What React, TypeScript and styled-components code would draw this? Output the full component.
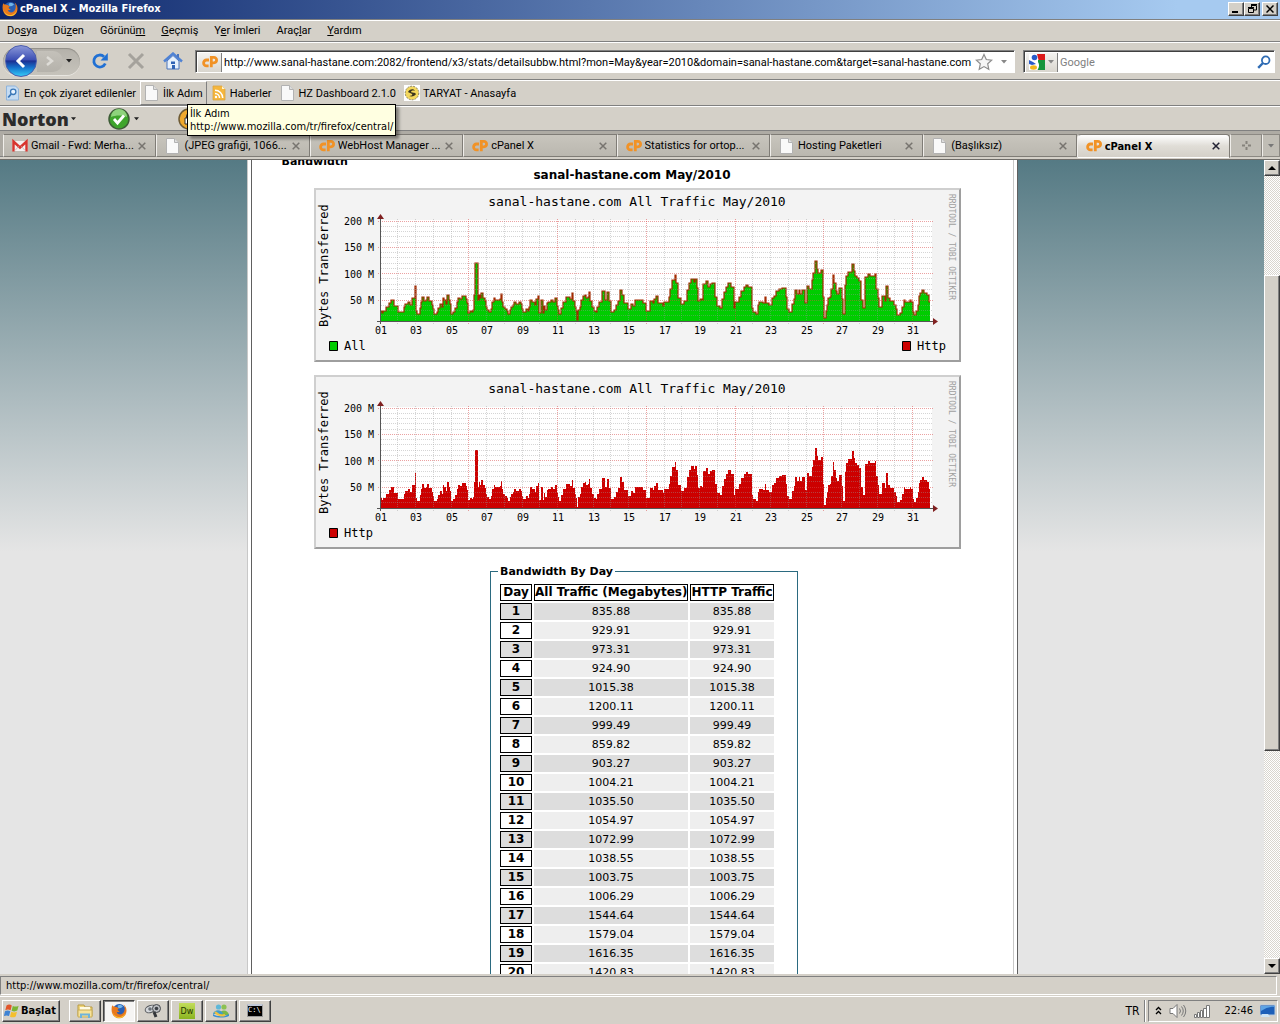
import React from "react";
import styled, { createGlobalStyle, css } from "styled-components";

const UI = `Tahoma, "DejaVu Sans Condensed", "DejaVu Sans", sans-serif`;
const NARROW = `Tahoma, Roboto, sans-serif`;
const PAGE = `Verdana, "DejaVu Sans", sans-serif`;
const MONO = `"DejaVu Sans Mono", monospace`;
const FACE = "#d4d0c8";

const Global = createGlobalStyle`
  * { box-sizing: border-box; }
  body { margin: 0; background: ${FACE}; font-family: ${UI}; font-size: 11px; color: #000; }
  button, input { font: inherit; color: inherit; padding: 0; border: 0; background: none; }
  svg { display: block; flex: none; }
`;

const raised = css`
  border: 1px solid;
  border-color: #fff #404040 #404040 #fff;
  box-shadow: inset -1px -1px 0 #808080;
  background: ${FACE};
`;

const Desktop = styled.div`
  display: flex;
  flex-direction: column;
  height: 100vh;
  overflow: hidden;
`;

const TitleBar = styled.header`
  display: flex;
  align-items: center;
  height: 20px;
  padding: 0 2px 2px;
  border-bottom: 1px solid #808080;
  background: linear-gradient(90deg, #0a246a, #a6caf0 92%);
  color: #fff;
  font-weight: bold;
`;
const TitleText = styled.h1`
  flex: 1;
  margin: 0 0 0 2px;
  font-size: 11px;
  line-height: 16px;
`;
const WindowButton = styled.button<{ $gap?: boolean }>`
  ${raised}
  display: grid;
  place-items: center;
  width: 16px;
  height: 14px;
  margin-left: ${(p) => (p.$gap ? 2 : 0)}px;
`;

const Bar = styled.div<{ $h: number }>`
  display: flex;
  align-items: center;
  flex: none;
  height: ${(p) => p.$h}px;
  border-top: 1px solid #fff;
  border-bottom: 1px solid #808080;
  background: ${FACE};
`;
const MenuBar = styled(Bar).attrs({ as: "nav" })`
  gap: 16px;
  padding: 0 7px;
  font-family: ${NARROW};
`;
const MenuButton = styled.button`
  line-height: 16px;
`;

const NavCapsule = styled.div`
  display: flex;
  align-items: center;
  width: 77px;
  height: 27px;
  margin-left: 3px;
  border-radius: 14px;
  background: linear-gradient(#b4b1aa, #c6c3bb);
  box-shadow: inset 0 1px 1px #918e88, 0 1px 0 #e8e6e1;
`;
const BackButton = styled.button`
  display: grid;
  place-items: center;
  width: 32px;
  height: 32px;
  margin-left: 2px;
  border-radius: 50%;
  border: 1px solid #4a5cae;
  background: linear-gradient(#8a97d8 0, #3c4fb4 46%, #1c2f92 50%, #1673cc 72%, #35c8f5 100%);
`;
const ForwardButton = styled.button`
  display: grid;
  place-items: center;
  width: 26px;
  height: 21px;
  border-radius: 0 10px 10px 0;
  background: linear-gradient(#c4c1ba, #b5b2ab);
`;
const IconButton = styled.button`
  display: grid;
  place-items: center;
  min-width: 12px;
  height: 20px;
`;
const NavTools = styled.div`
  display: flex;
  gap: 18px;
  margin: 0 12px 0 11px;
`;
const Field = styled.div`
  display: flex;
  align-items: stretch;
  height: 23px;
  border: 1px solid;
  border-color: #808080 #fff #fff #808080;
  box-shadow: inset 1px 1px 0 #404040;
  background: #fff;
  padding: 2px 0 0 2px;
`;
const AddressField = styled(Field)`
  flex: 1;
`;
const SearchField = styled(Field)`
  width: 252px;
  margin: 0 5px 0 8px;
`;
const SiteBadge = styled.button<{ $w: number }>`
  display: flex;
  align-items: center;
  justify-content: space-evenly;
  width: ${(p) => p.$w}px;
  border-right: 1px solid #808080;
  background: linear-gradient(#f4f3f1, #d8d5ce);
`;
const TextInput = styled.input`
  flex: 1;
  min-width: 0;
  padding-left: 2px;
  outline: 0;
  font-family: ${NARROW};
  &::placeholder { color: #808080; opacity: 1; }
`;
const FieldTool = styled.button`
  display: grid;
  place-items: center;
  width: 20px;
`;

const Bookmarks = styled(Bar)`
  padding-left: 1px;
  font-family: ${NARROW};
`;
const Bookmark = styled.a<{ $hot?: boolean }>`
  display: flex;
  align-items: center;
  gap: 3px;
  height: 24px;
  padding: 0 3px;
  border: 1px solid;
  border-color: ${(p) => (p.$hot ? "#fff #808080 #808080 #fff" : "transparent")};
  color: #000;
  text-decoration: none;
  white-space: nowrap;
`;
const HoverHost = styled.div`
  position: relative;
`;
const Tooltip = styled.div`
  position: absolute;
  z-index: 5;
  left: 47px;
  top: 23px;
  padding: 2px;
  border: 1px solid #000;
  background: #ffffe1;
  box-shadow: 3px 3px 3px #0006;
  font-family: ${UI};
  line-height: 13px;
  white-space: nowrap;
`;

const NortonBar = styled(Bar)`
  padding-left: 2px;
`;
const NortonName = styled.button`
  display: flex;
  align-items: center;
  gap: 2px;
  width: 106px;
  color: #2b2b2b;
  font: 800 18px/22px "Open Sans", sans-serif;
`;
const NortonStatus = styled.button`
  display: flex;
  align-items: center;
  gap: 4px;
  width: 70px;
`;

const TabStrip = styled.div`
  display: flex;
  flex: none;
  height: 29px;
  padding: 3px 0 0 3px;
  background: linear-gradient(#aeaba4 0 25px, #808080 25px 26px, #d4d0c8 26px 28px, #6f6d69 28px);
  font-family: ${NARROW};
`;
const Tab = styled.div<{ $active?: boolean }>`
  display: flex;
  align-items: center;
  flex: 1 1 0;
  min-width: 0;
  gap: 3px;
  height: ${(p) => (p.$active ? 24 : 23)}px;
  padding: 0 9px 0 8px;
  border: 1px solid #7f7c76;
  border-bottom-color: ${(p) => (p.$active ? "transparent" : "#7f7c76")};
  border-left-color: #f0eeea;
  border-radius: ${(p) => (p.$active ? "4px 4px 0 0" : "0")};
  background: ${(p) => (p.$active ? "linear-gradient(#fff, #e0ddd7 50%, #d4d0c8)" : "linear-gradient(#c8c5bd, #bab7af)")};
  font-family: ${(p) => (p.$active ? UI : NARROW)};
  font-weight: ${(p) => (p.$active ? "bold" : "normal")};
`;
const TabLabel = styled.button`
  flex: 1;
  min-width: 0;
  overflow: hidden;
  text-align: left;
  white-space: nowrap;
`;
const StripButton = styled.button<{ $w: number }>`
  display: grid;
  place-items: center;
  width: ${(p) => p.$w}px;
  height: 23px;
  border: 1px solid #8c8983;
  border-left-color: #f0eeea;
  background: #c0bdb5;
`;

const Viewport = styled.div`
  display: flex;
  flex: 1;
  min-height: 0;
`;
const PageArea = styled.main`
  display: flex;
  justify-content: center;
  flex: 1;
  overflow: hidden;
  background: linear-gradient(#557a84 0, #e5e5e5 392px);
  font-family: ${PAGE};
`;
const Sheet = styled.div`
  width: 771px;
  padding: 0 3px;
  border-left: 1px solid #c8c8c8;
  border-right: 1px solid #606060;
  background: #fff;
`;
const SheetInner = styled.div`
  height: 100%;
  overflow: hidden;
  border-left: 1px solid #606060;
  border-right: 1px solid #c8c8c8;
`;
const SectionTitle = styled.h2`
  margin: -5px 0 0 30px;
  font-size: 11px;
  line-height: 13px;
`;
const PeriodTitle = styled.h3`
  margin: 0 0 6px;
  font-size: 12px;
  line-height: 14px;
  text-align: center;
`;
const ChartFrame = styled.figure`
  width: 647px;
  margin: 0 auto 13px;
  border: 2px solid;
  border-color: #cfcfcf #9e9e9e #9e9e9e #cfcfcf;
  background: #f3f3f3;
`;
const Centered = styled.div<{ $shift: number }>`
  padding-left: ${(p) => p.$shift}px;
`;
const DayBox = styled.fieldset`
  width: 308px;
  min-height: 460px;
  margin: 14px auto 0;
  padding: 0 7px;
  border: 1px solid #2b6a80;
`;
const DayLegend = styled.legend`
  padding: 1px 2px 0;
  font-weight: bold;
  line-height: 16px;
`;
const DayTable = styled.table`
  width: 278px;
  margin-top: 2px;
  table-layout: fixed;
  border-collapse: separate;
  border-spacing: 2px;
  text-align: center;
  line-height: 15px;
`;
const Column = styled.col<{ $w: number }>`
  width: ${(p) => p.$w}px;
`;
const Head = styled.th<{ $shade?: boolean }>`
  padding: 0;
  border: 1px solid #000;
  background: ${(p) => (p.$shade ? "#ddd" : "#fff")};
  font-size: 12px;
  white-space: nowrap;
`;
const Cell = styled.td<{ $shade?: boolean }>`
  padding: 1px;
  background: ${(p) => (p.$shade ? "#ddd" : "#eee")};
`;

const ScrollTrack = styled.div`
  display: flex;
  flex-direction: column;
  width: 16px;
  background: repeating-conic-gradient(#fff 0 25%, #d8d5ce 0 50%) 0 0 / 2px 2px;
`;
const ScrollButton = styled.button`
  ${raised}
  display: grid;
  place-items: center;
  height: 16px;
`;
const ScrollGap = styled.div<{ $grow: number }>`
  flex: ${(p) => p.$grow};
`;
const Thumb = styled.div`
  ${raised}
  flex: 475;
`;

const StatusBar = styled.footer`
  flex: none;
  height: 22px;
  padding: 2px 3px 1px 0;
  background: ${FACE};
`;
const StatusText = styled.div`
  height: 19px;
  padding-left: 5px;
  border: 1px solid;
  border-color: #808080 #fff #fff #808080;
  line-height: 18px;
`;
const TaskBar = styled.div`
  display: flex;
  align-items: center;
  flex: none;
  height: 28px;
  padding: 0 2px;
  border-top: 1px solid #fff;
  background: ${FACE};
`;
const StartButton = styled.button`
  ${raised}
  display: flex;
  align-items: center;
  gap: 1px;
  width: 58px;
  height: 22px;
  padding-left: 1px;
  margin-right: 9px;
  font-weight: bold;
`;
const TaskButton = styled.button<{ $active?: boolean }>`
  ${raised}
  display: grid;
  place-items: center;
  width: 32px;
  height: 22px;
  margin-right: 2px;
  ${(p) => p.$active && css`
    background: #f6f5f3;
    border-color: #404040 #fff #fff #404040;
    box-shadow: inset 1px 1px 0 #808080;
  `}
`;
const Spacer = styled.div`
  flex: 1;
`;
const Language = styled.span`
  padding-right: 5px;
  margin-right: 3px;
  border-right: 1px solid #808080;
  box-shadow: 1px 0 0 #fff;
  font-size: 12px;
  line-height: 22px;
`;
const Tray = styled.div`
  display: flex;
  align-items: center;
  gap: 7px;
  height: 22px;
  padding: 0 1px 0 6px;
  border: 1px solid;
  border-color: #808080 #fff #fff #808080;
`;
const Clock = styled.time`
  margin-left: 6px;
  font-size: 11px;
`;

/* ---------- icons ---------- */
const Caret = ({ color = "#222", w = 6 }) => (
  <svg width={w} height="4" viewBox="0 0 6 4"><path d="M0 0h6L3 3.4z" fill={color} /></svg>
);
const FirefoxIcon = ({ size = 16 }) => (
  <svg width={size} height={size} viewBox="0 0 16 16">
    <circle cx="8.3" cy="7.6" r="6.6" fill="#2a5fb4" />
    <path d="M7 2.5c2-1 4-.4 5 1l-2 1.500-2 .2-1.500-1z" fill="#6fb4e8" />
    <path d="M1.200 2.200c-.9 3-.9 6.300.3 8.800 1.500 3.200 4.700 4.700 7.600 4.300 3.900-.4 6.400-3.800 6.400-7.500 0-2.500-1-4.800-2.900-6.200 1.200 2 1.400 4 .9 5.600-.4 2.500-2.300 4.300-4.700 4.200-1.800-.1-3-1.300-2.900-2.300 1 .3 2.100 0 2.800-.8-1.300-.1-2-.8-2-1.500 0-.6.800-.9 1.600-1.500-1-.1-2-.4-2.600-1.300-.9 0-1.400-.2-1.900-.6-.9.1-1.900-.2-2.600-1.200z" fill="#e8781c" />
    <path d="M1.500 8c.5 3.500 3.400 6 6.800 6 3.300 0 6-2.300 6.400-5.500.3 3.600-2.600 6.500-6.200 6.600C4.600 15.200 1.600 12 1.500 8z" fill="#f9c22e" />
  </svg>
);
const PageIcon = () => (
  <svg width="16" height="16" viewBox="0 0 16 16">
    <path d="M1.500.5h8l4 4v11h-12z" fill="#f9f9f9" stroke="#b2b2b2" />
    <path d="M9.500.5v4h4" fill="#ddd" stroke="#b2b2b2" />
  </svg>
);
const CpIcon = () => (
  <svg width="16" height="16" viewBox="0 0 16 16" fill="none" stroke="#f19226" strokeWidth="2.800">
    <path d="M7 6H4.500a2.900 2.900 0 0 0 0 5.800H6.600" />
    <path d="M9.300 13.300V3.400h2.600a2.700 2.700 0 0 1 0 5.400H9.300" />
  </svg>
);
const GmailIcon = () => (
  <svg width="16" height="16" viewBox="0 0 16 16">
    <path d="M.5 3h15v10H.5z" fill="#f4f0f0" />
    <path d="M1.500 13.500v-10L8 9.500l6.500-6v10" fill="none" stroke="#d8342e" strokeWidth="2.400" />
    <path d="M3 12.500l3.500-4M13 12.500l-3.500-4" stroke="#d9b8b8" />
  </svg>
);
const CloseMark = ({ color = "#77746f" }) => (
  <svg width="8" height="8" viewBox="0 0 8 8"><path d="M.7.7l6.600 6.600M7.300.7L.7 7.300" stroke={color} strokeWidth="1.500" /></svg>
);
const RssIcon = () => (
  <svg width="16" height="16" viewBox="0 0 16 16">
    <path d="M2 1h9l3 3v11H2z" fill="#f5b63c" stroke="#d9a441" strokeWidth=".8" />
    <path d="M11 1v3h3" fill="#fff3d0" />
    <g fill="none" stroke="#fff" strokeWidth="1.500"><path d="M4 8.500a4.500 4.500 0 0 1 4.500 4.500M4 5.300A7.700 7.700 0 0 1 11.700 13" /></g>
    <circle cx="5" cy="12" r="1.200" fill="#fff" />
  </svg>
);
const VisitedIcon = () => (
  <svg width="16" height="16" viewBox="0 0 16 16">
    <path d="M1.500 1h9l3 3v11h-12z" fill="#c4dbf2" stroke="#8fb4dc" />
    <circle cx="8.200" cy="6.800" r="2.700" fill="#e9f4ff" stroke="#3b78b8" strokeWidth="1.300" />
    <path d="M6.200 9l-3 3.500" stroke="#3b78b8" strokeWidth="1.800" />
  </svg>
);
const TaryatIcon = () => (
  <svg width="16" height="16" viewBox="0 0 16 16">
    <path d="M0 0h16v16H0z" fill="#fff" />
    <circle cx="8" cy="8" r="6.800" fill="#f3d75c" stroke="#8d8460" strokeDasharray="2 1" />
    <path d="M4 7c1-3 6-4 7-1-2-1-4 0-4 1 1 1 4 0 5 2-1 2-4 3-7 2 2 0 4-1 3-2S5 8 4 7z" fill="#3a3420" />
  </svg>
);
const ReloadIcon = () => (
  <svg width="18" height="18" viewBox="0 0 18 18">
    <path d="M14.300 11.500A6 6 0 1 1 13 4.700" fill="none" stroke="#2070d4" strokeWidth="2.800" />
    <path d="M16.800 1v7.500H9.500z" fill="#2070d4" />
  </svg>
);
const StopIcon = () => (
  <svg width="18" height="18" viewBox="0 0 18 18"><path d="M2 2l14 14M16 2L2 16" stroke="#a5a29c" strokeWidth="3" /></svg>
);
const HomeIcon = () => (
  <svg width="20" height="18" viewBox="0 0 20 18">
    <path d="M4 9l6-5.500L16 9v8H4z" fill="#e6f0fc" stroke="#4a74bd" />
    <path d="M1 9.500L10 1.500l9 8" fill="none" stroke="#4f82d4" strokeWidth="2.400" />
    <path d="M8 9.500h4v2.500H8zM9 13h3v4H9z" fill="#2f62b5" />
    <path d="M14 2h2v4l-2-1.500z" fill="#4a74bd" />
  </svg>
);
const StarIcon = () => (
  <svg width="18" height="18" viewBox="0 0 18 18">
    <path d="M9 1.500l2.300 5 5.400.6-4 3.700 1.100 5.500L9 13.600l-4.800 2.700 1.100-5.500-4-3.700 5.400-.6z" fill="#f6f6f6" stroke="#8d8d8d" strokeWidth="1.200" />
  </svg>
);
const GoogleIcon = () => (
  <svg width="16" height="16" viewBox="0 0 16 16">
    <path d="M0 0h16v16H0z" fill="#fff" />
    <path d="M8 0h8v6H9.500z" fill="#dd1a1a" />
    <path d="M9 6h7v10H8.500c2-3 2-6 .5-8z" fill="#15953d" />
    <circle cx="5.500" cy="3.500" r="2.800" fill="#2a5bc8" />
    <path d="M0 6l4 2 3 2-4 1-3-1z" fill="#2a5bc8" />
    <ellipse cx="4.500" cy="13.500" rx="3.500" ry="2.200" fill="#f0b81c" />
  </svg>
);
const SearchIcon = () => (
  <svg width="14" height="14" viewBox="0 0 14 14" fill="none" stroke="#2f6cb4">
    <circle cx="8.700" cy="5.200" r="3.800" strokeWidth="1.800" /><path d="M6 8L1.200 12.800" strokeWidth="2.400" />
  </svg>
);
const CheckBall = () => (
  <svg width="22" height="22" viewBox="0 0 22 22">
    <circle cx="11" cy="11" r="10" fill="#3fa52c" stroke="#3d5c36" strokeWidth="1.500" />
    <path d="M3 9a8 8 0 0 1 16 0c-5-2-11-2-16 0z" fill="#8ed37c" />
    <path d="M6 11l3.500 4L16 7.500" fill="none" stroke="#fff" strokeWidth="2.800" />
  </svg>
);
const LockBall = () => (
  <svg width="22" height="22" viewBox="0 0 22 22">
    <circle cx="11" cy="11" r="10" fill="#f0a92c" stroke="#6e5b35" strokeWidth="1.500" />
    <path d="M7 10h8v6H7zM8.500 10V8a2.500 2.500 0 0 1 5 0v2" fill="#fff" stroke="#333" />
  </svg>
);
const WindowsFlag = () => (
  <svg width="16" height="16" viewBox="0 0 16 16">
    <path d="M2.500 2.500c2-1.300 3.700-1 5.300-.1L6.600 7.300c-1.700-1-3.500-1-5.300 0z" fill="#e2562a" />
    <path d="M8.800 2.900c1.900 1 3.800.9 5.800-.2l-1.300 4.900c-1.900 1.100-3.800 1-5.700.2z" fill="#7ab534" />
    <path d="M1 8.300c1.900-1.200 3.600-1 5.300-.1l-1.300 4.900c-1.600-.9-3.400-1-5.200.1z" fill="#3f83d3" />
    <path d="M7.300 8.800c1.900 1 3.700.9 5.700-.1l-1.300 4.800c-1.900 1.200-3.800 1-5.700.2z" fill="#f4bf2c" />
  </svg>
);
const FolderIcon = () => (
  <svg width="18" height="16" viewBox="0 0 18 16">
    <path d="M2 2h6l1 2h7v9H2z" fill="#f0d67a" stroke="#b99b45" />
    <path d="M4 4h10v5H4z" fill="#fffbe4" />
    <path d="M2 7h14v7H2z" fill="#f7e39a" stroke="#c9ad57" />
    <path d="M5 15v-3.500h8V15" fill="none" stroke="#6fb3da" strokeWidth="2" />
  </svg>
);
const DishIcon = () => (
  <svg width="18" height="16" viewBox="0 0 18 16">
    <ellipse cx="6.500" cy="6" rx="5.500" ry="3.500" transform="rotate(-20 6.500 6)" fill="#d5d8dc" stroke="#55585c" />
    <circle cx="6" cy="6" r="1.800" fill="#6a7078" />
    <circle cx="12.500" cy="5.500" r="4" fill="#b9bcc0" stroke="#44474b" /><circle cx="12.500" cy="5.500" r="1.800" fill="#3c4046" />
    <path d="M10 9l2 5" stroke="#34373b" strokeWidth="3" />
  </svg>
);
const PeopleIcon = () => (
  <svg width="18" height="16" viewBox="0 0 18 16">
    <circle cx="6.500" cy="4" r="2.600" fill="#5fb8d8" /><circle cx="12" cy="4" r="2.600" fill="#8cc152" />
    <path d="M7 12c1-6 9-6 10 0z" fill="#79b84a" /><path d="M1 11c1-5 9-5 10 0z" fill="#3f9ccc" />
    <path d="M1 11c4 3 11 3 16 0v2c-5 2-11 2-16 0z" fill="#3b8fd0" />
    <path d="M3 9c3 3 7 4 10 3" fill="none" stroke="#f0c040" strokeWidth="2" />
  </svg>
);
const DwBadge = styled.span`
  display: grid;
  place-items: center;
  width: 16px;
  height: 16px;
  background: linear-gradient(#c3dd5a, #8bb420);
  color: #243500;
  font-size: 9px;
`;
const CmdBadge = styled.span`
  width: 16px;
  height: 13px;
  border: 1px solid #999;
  border-top: 2px solid #c0c8d8;
  background: #000;
  color: #fff;
  font: 7px/9px ${MONO};
  text-align: left;
`;

/* ---------- traffic chart ---------- */
// Each entry is "x:height" in plot units; the level holds until the next entry.
const SERIES = `0:10 1:8 2:10 5:14 8:18 10:21 13:15 17:9 23:14 24:17 27:19 29:16 31:23 34:35 35:10 36:7 39:13 40:19 41:24 43:20 45:21 46:24
48:20 51:16 52:12 53:7 56:9 57:13 59:17 61:14 62:23 63:21 65:17 66:26 68:21 69:17 70:7 72:9 74:13 76:19 77:23 79:22 81:25 85:22 86:18 87:8
89:10 91:9 92:11 93:26 94:58 97:21 98:26 99:23 100:28 102:23 104:20 105:14 106:11 108:9 110:12 111:19 113:23 114:21 119:22 120:27 121:19
122:14 124:12 126:10 127:7 129:11 130:14 132:16 133:19 135:17 138:19 140:17 141:12 142:9 145:12 147:10 148:14 149:21 151:19 154:16 155:22
157:25 158:8 160:21 162:8 163:15 164:11 166:18 167:19 170:21 172:19 174:23 176:15 177:11 178:7 180:13 182:19 185:24 187:24 189:22 191:28
192:20 194:14 195:10 196:1 197:11 199:14 200:21 202:25 204:26 205:23 207:24 208:29 209:20 211:14 213:10 215:9 216:14 218:19 221:30 224:21
226:29 228:20 230:9 233:11 235:16 237:20 239:31 241:26 243:18 247:12 250:17 252:15 254:21 262:18 265:10 269:20 272:18 273:22 275:25 277:18
282:15 283:19 288:24 289:32 291:41 294:46 295:38 297:23 300:17 303:20 306:31 308:38 310:42 313:39 314:42 316:33 317:20 319:22 321:21 322:37
325:40 327:34 329:37 331:38 334:24 336:15 339:13 341:22 343:29 345:34 347:38 350:34 353:13 354:19 358:24 360:30 363:34 365:36 367:34 371:13
372:9 375:7 377:16 378:19 382:18 384:24 385:18 388:16 391:23 393:25 395:30 398:32 401:33 405:24 406:12 408:9 411:17 413:22 414:31 416:27
418:31 419:27 421:31 424:18 426:35 428:32 431:41 432:48 434:60 436:52 437:48 440:51 442:24 443:3 445:10 446:16 447:23 449:24 450:32 452:46
453:38 455:30 456:27 458:33 461:22 462:7 464:36 465:45 467:49 471:57 473:50 474:45 476:43 478:40 480:21 482:13 484:44 487:47 489:45 494:47
495:32 497:23 498:14 501:25 504:20 505:35 507:23 509:20 513:16 515:12 516:6 519:8 521:14 523:21 524:19 529:21 530:19 532:9 533:6 535:10
537:16 538:25 539:28 541:31 543:28 546:26 548:19 549:19`
  .split(/\s+/)
  .map((p) => p.split(":").map(Number));

const X0 = 65;
const Y0 = 131;
const steps = SERIES.map(([x, h], i) => `${i ? `H${X0 + x}` : `M${X0}`}${i ? "V" : " "}${Y0 - h}`).join("");
const areaPath = `${steps}V${Y0}H${X0}z`;

const ChartSvg = styled.svg`
  width: 100%;
  font-family: ${MONO};
`;
const ScaleText = styled.text`
  font-size: 10px;
`;
const LegendText = styled.text`
  font-size: 12px;
`;
const HeadingText = styled.text`
  font-size: 13px;
`;
const CreditText = styled.text`
  font-size: 8px;
  fill: #a0a0a0;
`;

const dayX = (d: number) => Math.floor(64 + d * 17.75);

function TrafficChart({ all }: { all?: boolean }) {
  const days = Array.from({ length: 31 }, (_, i) => i);
  return (
    <ChartFrame>
      <ChartSvg viewBox="0 0 643 170" role="img" aria-label="Traffic chart">
        <path d="M65 30h551v101H65z" fill="#fff" />
        <path d={areaPath} fill={all ? "#00cc00" : "#cc0000"} />
        {all && <path d={steps} fill="none" stroke="#a32a00" strokeWidth="1.200" />}
        <g shapeRendering="crispEdges" strokeDasharray="1 1">
          {Array.from({ length: 19 }, (_, k) => (
            <path key={k} d={`M${k % 5 ? 65 : 62} ${Math.floor(31 + k * 5.27) + 0.5}H617`} stroke={k % 5 ? "#999" : "#d84848"} opacity={k % 5 ? 0.4 : 0.5} />
          ))}
          {days.map((d) => (
            <path key={d} d={`M${dayX(d) + 0.5} 29V134`} stroke={d % 5 ? "#999" : "#d84848"} opacity={d % 5 ? 0.4 : 0.5} />
          ))}
        </g>
        <path d="M64.500 27V134M61 131.500H619" stroke="#555" shapeRendering="crispEdges" />
        <path d="M61 29l3.500-5 3.500 5zM617 128l5 3.500-5 3.500z" fill="#802020" />
        {[200, 150, 100, 50].map((v, i) => (
          <ScaleText key={v} x="58" y={35 + Math.round(i * 26.4)} textAnchor="end">{v} M</ScaleText>
        ))}
        {days.filter((d) => d % 2 === 0).map((d) => (
          <ScaleText key={d} x={dayX(d) + 1} y="144" textAnchor="middle">{String(d + 1).padStart(2, "0")}</ScaleText>
        ))}
        <HeadingText x="321" y="16" textAnchor="middle">sanal-hastane.com All Traffic May/2010</HeadingText>
        <LegendText transform="translate(12 137) rotate(-90)">Bytes Transferred</LegendText>
        <CreditText transform="translate(633 4) rotate(90)">RRDTOOL / TOBI OETIKER</CreditText>
        <path d="M13.500 151.500h8v9h-8z" fill={all ? "#00cc00" : "#cc0000"} stroke="#000" />
        <LegendText x="28" y="160">{all ? "All" : "Http"}</LegendText>
        {all && (
          <>
            <path d="M586.500 151.500h8v9h-8z" fill="#cc0000" stroke="#000" />
            <LegendText x="601" y="160">Http</LegendText>
          </>
        )}
      </ChartSvg>
    </ChartFrame>
  );
}

const MENU = [["Do", "s", "ya"], ["Dü", "z", "en"], ["Görünü", "m", ""], ["", "G", "eçmiş"], ["Y", "e", "r İmleri"], ["Araç", "l", "ar"], ["", "Y", "ardım"]];
const TABS: { label: string; icon: React.ReactNode; active?: boolean }[] = [
  { label: "Gmail - Fwd: Merha...", icon: <GmailIcon /> },
  { label: "(JPEG grafiği, 1066...", icon: <PageIcon /> },
  { label: "WebHost Manager ...", icon: <CpIcon /> },
  { label: "cPanel X", icon: <CpIcon /> },
  { label: "Statistics for ortop...", icon: <CpIcon /> },
  { label: "Hosting Paketleri", icon: <PageIcon /> },
  { label: "(Başlıksız)", icon: <PageIcon /> },
  { label: "cPanel X", icon: <CpIcon />, active: true },
];
const DAYS = ["835.88", "929.91", "973.31", "924.90", "1015.38", "1200.11", "999.49", "859.82", "903.27", "1004.21", "1035.50", "1054.97", "1072.99", "1038.55", "1003.75", "1006.29", "1544.64", "1579.04", "1616.35", "1420.83"];

export default function App() {
  return (
    <Desktop>
      <Global />
      <TitleBar>
        <FirefoxIcon />
        <TitleText>cPanel X - Mozilla Firefox</TitleText>
        <WindowButton aria-label="Minimize"><svg width="8" height="8"><path d="M0 6h6v2H0z" /></svg></WindowButton>
        <WindowButton aria-label="Restore"><svg width="9" height="9" fill="none" stroke="#000"><path d="M3 1.500h5.500V6H6M.5 4.500h5v4h-5zM3 .5h6M0 3.500h6M3.500 0v3" /></svg></WindowButton>
        <WindowButton aria-label="Close" $gap><svg width="8" height="8"><path d="M.5.5l7 7M7.500.5l-7 7" stroke="#000" strokeWidth="1.500" /></svg></WindowButton>
      </TitleBar>
      <MenuBar $h={22}>
        {MENU.map(([a, u, b]) => <MenuButton key={a + u + b}>{a}<u>{u}</u>{b}</MenuButton>)}
      </MenuBar>
      <Bar $h={38}>
        <NavCapsule>
          <BackButton aria-label="Back"><svg width="14" height="16"><path d="M10 2L4 8l6 6" fill="none" stroke="#fff" strokeWidth="3" /></svg></BackButton>
          <ForwardButton aria-label="Forward"><svg width="12" height="12"><path d="M3 2l5 4-5 4" fill="none" stroke="#dedcd7" strokeWidth="2.500" /></svg></ForwardButton>
          <IconButton aria-label="History"><Caret /></IconButton>
        </NavCapsule>
        <NavTools>
          <IconButton aria-label="Reload"><ReloadIcon /></IconButton>
          <IconButton aria-label="Stop"><StopIcon /></IconButton>
          <IconButton aria-label="Home"><HomeIcon /></IconButton>
        </NavTools>
        <AddressField>
          <SiteBadge $w={24} aria-label="Site"><CpIcon /></SiteBadge>
          <TextInput aria-label="Address" defaultValue="http://www.sanal-hastane.com:2082/frontend/x3/stats/detailsubbw.html?mon=May&year=2010&domain=sanal-hastane.com&target=sanal-hastane.com" />
          <FieldTool aria-label="Bookmark this page"><StarIcon /></FieldTool>
          <FieldTool aria-label="Show history"><Caret color="#888" /></FieldTool>
        </AddressField>
        <SearchField>
          <SiteBadge $w={32} aria-label="Search engine"><GoogleIcon /><Caret color="#888" /></SiteBadge>
          <TextInput aria-label="Search" placeholder="Google" />
          <FieldTool aria-label="Search"><SearchIcon /></FieldTool>
        </SearchField>
      </Bar>
      <Bookmarks $h={26}>
        <Bookmark href="#"><VisitedIcon />En çok ziyaret edilenler</Bookmark>
        <HoverHost>
          <Bookmark href="#" $hot><PageIcon />İlk Adım</Bookmark>
          <Tooltip role="tooltip">İlk Adım<br />http://www.mozilla.com/tr/firefox/central/</Tooltip>
        </HoverHost>
        <Bookmark href="#"><RssIcon />Haberler</Bookmark>
        <Bookmark href="#"><PageIcon />HZ Dashboard 2.1.0</Bookmark>
        <Bookmark href="#"><TaryatIcon />TARYAT - Anasayfa</Bookmark>
      </Bookmarks>
      <NortonBar $h={25}>
        <NortonName>Norton<Caret w={5} /></NortonName>
        <NortonStatus aria-label="Site safe"><CheckBall /><Caret w={5} /></NortonStatus>
        <NortonStatus aria-label="Identity"><LockBall /></NortonStatus>
      </NortonBar>
      <TabStrip>
        {TABS.map((t, i) => (
          <Tab key={i} $active={t.active}>
            {t.icon}
            <TabLabel>{t.label}</TabLabel>
            <button aria-label="Close tab"><CloseMark color={t.active ? "#222233" : undefined} /></button>
          </Tab>
        ))}
        <StripButton $w={32} aria-label="New tab"><svg width="9" height="9"><path d="M4.500 0v9M0 4.500h9" stroke="#86837d" strokeDasharray="3 3" strokeWidth="2" /></svg></StripButton>
        <StripButton $w={18} aria-label="List tabs"><Caret color="#777" /></StripButton>
      </TabStrip>
      <Viewport>
        <PageArea>
          <Sheet>
            <SheetInner>
              <SectionTitle>Bandwidth</SectionTitle>
              <PeriodTitle>sanal-hastane.com May/2010</PeriodTitle>
              <Centered $shift={10}>
                <TrafficChart all />
                <TrafficChart />
              </Centered>
              <Centered $shift={24}>
                <DayBox>
                  <DayLegend>Bandwidth By Day</DayLegend>
                  <DayTable>
                    <colgroup><Column $w={32} /><Column $w={154} /><Column $w={84} /></colgroup>
                    <thead><tr><Head>Day</Head><Head>All Traffic (Megabytes)</Head><Head>HTTP Traffic</Head></tr></thead>
                    <tbody>
                      {DAYS.map((v, i) => (
                        <tr key={i}>
                          <Head scope="row" $shade={i % 2 === 0}>{i + 1}</Head>
                          <Cell $shade={i % 2 === 0}>{v}</Cell>
                          <Cell $shade={i % 2 === 0}>{v}</Cell>
                        </tr>
                      ))}
                    </tbody>
                  </DayTable>
                </DayBox>
              </Centered>
            </SheetInner>
          </Sheet>
        </PageArea>
        <ScrollTrack>
          <ScrollButton aria-label="Scroll up"><svg width="8" height="4"><path d="M0 4h8L4 0z" /></svg></ScrollButton>
          <ScrollGap $grow={99} />
          <Thumb />
          <ScrollGap $grow={207} />
          <ScrollButton aria-label="Scroll down"><svg width="8" height="4"><path d="M0 0h8L4 4z" /></svg></ScrollButton>
        </ScrollTrack>
      </Viewport>
      <StatusBar><StatusText>http://www.mozilla.com/tr/firefox/central/</StatusText></StatusBar>
      <TaskBar>
        <StartButton><WindowsFlag />Başlat</StartButton>
        <TaskButton aria-label="Explorer"><FolderIcon /></TaskButton>
        <TaskButton aria-label="Firefox" $active><FirefoxIcon /></TaskButton>
        <TaskButton aria-label="Satellite"><DishIcon /></TaskButton>
        <TaskButton><DwBadge>Dw</DwBadge></TaskButton>
        <TaskButton aria-label="Messenger"><PeopleIcon /></TaskButton>
        <TaskButton><CmdBadge>C:\</CmdBadge></TaskButton>
        <Spacer />
        <Language>TR</Language>
        <Tray>
          <svg width="7" height="10" fill="none" stroke="#000" strokeWidth="1.300"><path d="M1 4l2.500-2.500L6 4M1 8l2.500-2.500L6 8" /></svg>
          <svg width="18" height="16" fill="none" stroke="#777"><path d="M1 5.500h3l4-4v13l-4-4H1z" fill="#fff" /><path d="M10.500 5.500q2 2.500 0 5M12.500 3.500q3.500 4.500 0 9M14.500 2q4.500 6 0 12" /></svg>
          <svg width="17" height="14" fill="#fff" stroke="#777"><path d="M.5 10.500h2v3h-2zM3.500 8.500h2v5h-2zM6.500 6.500h2v7h-2zM9.500 4.500h3v9h-3zM12.500 1.500h3v12h-3z" /></svg>
          <Clock>22:46</Clock>
          <svg width="16" height="14"><path d="M0 1h15v10H0z" fill="#1d5fb8" stroke="#bcd" /><path d="M1 7q7-5 14-4V2H1z" fill="#5fa4e4" /><path d="M2 10h6l2 3H1z" fill="#cfe4f4" /></svg>
        </Tray>
      </TaskBar>
    </Desktop>
  );
}
